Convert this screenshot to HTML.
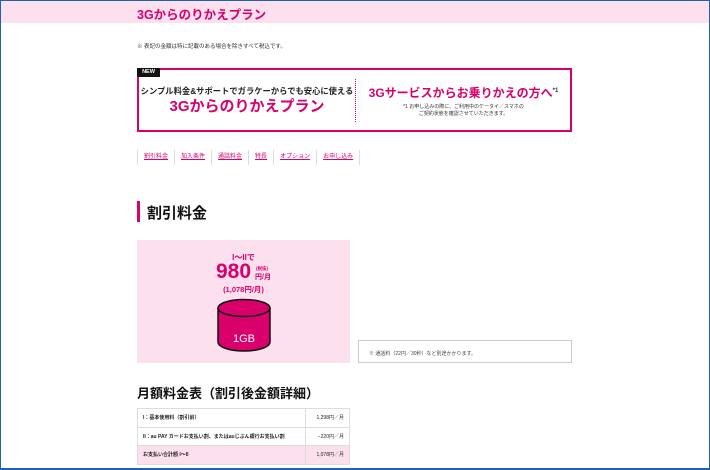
<!DOCTYPE html>
<html><head><meta charset="utf-8"><style>
*{margin:0;padding:0;box-sizing:border-box}
body{width:710px;height:470px;overflow:hidden;background:#fff;font-family:"Liberation Sans","Noto Sans CJK JP",sans-serif;position:relative}
.frame{position:absolute;left:0;top:0;width:710px;height:470px;border:1px solid #1f62b0;border-bottom:2px solid #1f62b0}
.abs{position:absolute;white-space:nowrap}
.hdr{left:1px;top:1px;width:708px;height:22px;background:#fde0ee}
.mg{color:#d9006c}
</style></head><body>
<div class="abs hdr"></div>
<div class="abs mg" style="left:137px;top:4px;font-size:12.5px;font-weight:bold;">3Gからのりかえプラン</div>
<div class="abs" style="left:137px;top:42px;font-size:5.5px;color:#333">※ 表記の金額は特に記載のある場合を除きすべて税込です。</div>

<div class="abs" style="left:137px;top:68px;width:435px;height:64px;border:2px solid #d9006c"></div>
<div class="abs" style="left:137px;top:68px;width:23px;height:9px;background:#111;color:#fff;font-size:5.5px;font-weight:bold;text-align:center;line-height:9px">NEW</div>
<div class="abs" style="left:139px;top:85px;width:216px;text-align:center;font-size:8.3px;font-weight:bold;color:#222">シンプル料金&amp;サポートでガラケーからでも安心に使える</div>
<div class="abs mg" style="left:139px;top:95px;width:216px;text-align:center;font-size:15px;font-weight:bold">3Gからのりかえプラン</div>
<div class="abs" style="left:355px;top:79px;height:43px;border-left:1px dotted #d9006c"></div>
<div class="abs mg" style="left:356px;top:84px;width:215px;text-align:center;font-size:12px;font-weight:bold">3Gサービスからお乗りかえの方へ<sup style="font-size:6px;color:#333">*1</sup></div>
<div class="abs" style="left:356px;top:104px;width:215px;text-align:center;font-size:5px;line-height:7px;color:#333">*1 お申し込みの際に、ご利用中のケータイ／スマホの<br>ご契約状態を確認させていただきます。</div>

<div class="abs" style="left:137px;top:150px;height:15px;display:flex;font-size:6px;line-height:15px">
<span style="border-left:1px solid #ddd;border-right:1px solid #ddd;padding:0 6px"><u class="mg">割引料金</u></span>
<span style="border-right:1px solid #ddd;padding:0 6px"><u class="mg">加入条件</u></span>
<span style="border-right:1px solid #ddd;padding:0 6px"><u class="mg">通話料金</u></span>
<span style="border-right:1px solid #ddd;padding:0 6px"><u class="mg">特長</u></span>
<span style="border-right:1px solid #ddd;padding:0 6px"><u class="mg">オプション</u></span>
<span style="border-right:1px solid #ddd;padding:0 6px"><u class="mg">お申し込み</u></span>
</div>

<div class="abs" style="left:137px;top:201px;width:3px;height:21px;background:#d9006c"></div>
<div class="abs" style="left:147px;top:202px;font-size:15px;font-weight:bold;color:#111">割引料金</div>

<div class="abs" style="left:137px;top:240px;width:213px;height:123px;background:#fde0ee"></div>
<div class="abs mg" style="left:137px;top:252px;width:213px;text-align:center;font-size:8px;font-weight:bold">I～IIで</div>
<div class="abs mg" style="left:216px;top:260px;font-size:21px;font-weight:bold">980</div>
<div class="abs mg" style="left:256px;top:266px;font-size:4.5px;font-weight:bold">(税抜)</div>
<div class="abs mg" style="left:255px;top:272px;font-size:7px;font-weight:bold">円/月</div>
<div class="abs mg" style="left:137px;top:284px;width:213px;text-align:center;font-size:7.5px;font-weight:bold">(1,078円/月)</div>
<svg class="abs" style="left:216px;top:298px" width="56" height="56" viewBox="0 0 56 56">
<path d="M2 10 V44 A26 9 0 0 0 54 44 V10" fill="#d9006c" stroke="#111" stroke-width="1.5"/>
<ellipse cx="28" cy="10" rx="26" ry="8.5" fill="#d9006c" stroke="#111" stroke-width="1.5"/>
<text x="28" y="44" text-anchor="middle" font-size="11" fill="#fff" font-family="Liberation Sans, sans-serif">1GB</text>
</svg>

<div class="abs" style="left:358px;top:340px;width:214px;height:23px;border:1px solid #ccc;font-size:5px;color:#444;padding:9px 0 0 10px">※ 通話料（22円／30秒）など別途かかります。</div>

<div class="abs" style="left:137px;top:383px;font-size:13px;font-weight:bold;color:#111">月額料金表（割引後金額詳細）</div>

<table class="abs" style="left:137px;top:408px;width:213px;border-collapse:collapse;font-size:5px;color:#222">
<tr style="height:18.5px"><td style="border:1px solid #ddd;padding-left:5px;font-weight:bold">I：基本使用料（割引前）</td><td style="border:1px solid #ddd;text-align:right;padding-right:5px;width:44px">1,298円／月</td></tr>
<tr style="height:18.5px"><td style="border:1px solid #ddd;padding-left:5px;font-weight:bold">II：au PAY カードお支払い割、またはauじぶん銀行お支払い割</td><td style="border:1px solid #ddd;text-align:right;padding-right:5px">−220円／月</td></tr>
<tr style="height:18.5px;background:#fde0ee"><td style="border:1px solid #ddd;padding-left:5px;font-weight:bold">お支払い合計額 I～II</td><td style="border:1px solid #ddd;text-align:right;padding-right:5px">1,078円／月</td></tr>
</table>
<div class="frame"></div>
</body></html>
